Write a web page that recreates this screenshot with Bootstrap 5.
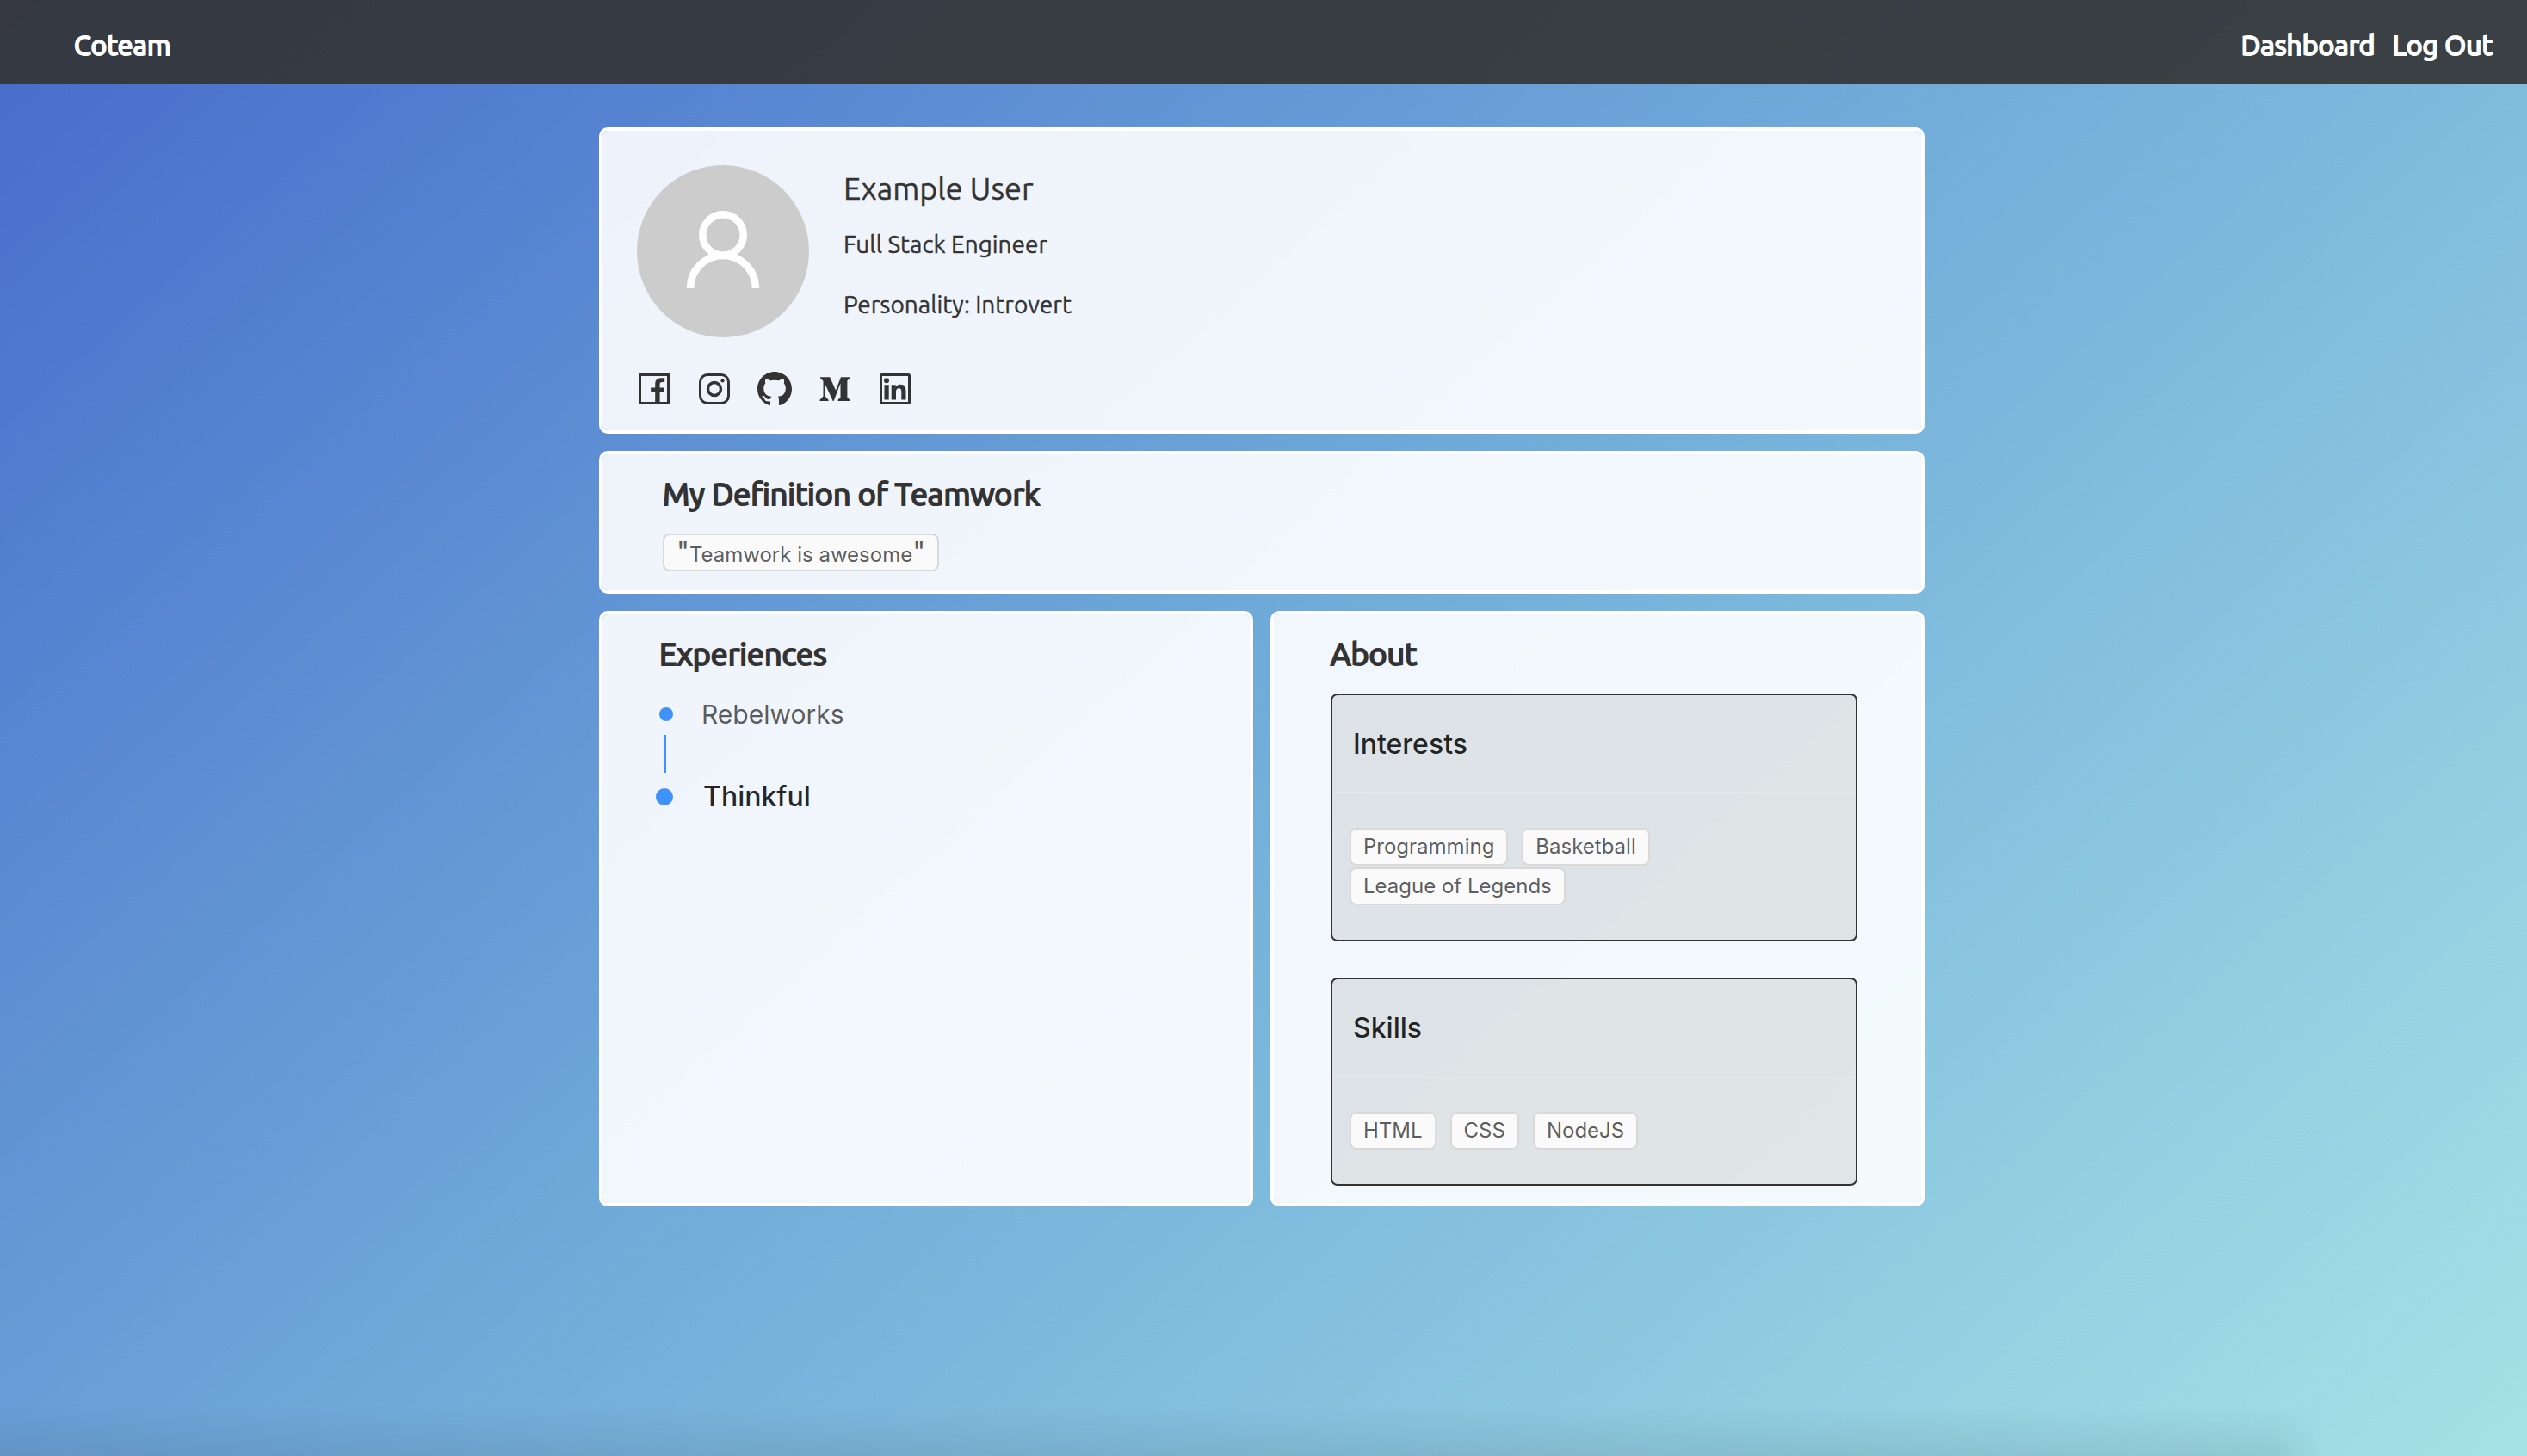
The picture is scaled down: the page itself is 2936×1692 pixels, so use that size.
<!DOCTYPE html>
<html lang="en">
<head>
<meta charset="utf-8">
<meta name="viewport" content="width=device-width, initial-scale=1">
<title>Coteam</title>
<link href="https://cdn.jsdelivr.net/npm/bootstrap@5.3.0/dist/css/bootstrap.min.css" rel="stylesheet">
<style>
  :root { --ink: #333; --display: Ubuntu, Lato, sans-serif; --ui: Inter, "Liberation Sans", sans-serif; }
  body {
    color: var(--ink);
    font-family: var(--display);
    font-size: 28px;
    line-height: 44px;
    background: linear-gradient(138deg, #466bcc 0%, #70abd9 48%, #a4e2e6 100%) no-repeat;
  }
  .topbar { padding: 28px 40px 22px 86px; background: rgba(51, 51, 51, .9); }
  .topbar a { color: #fff; font-size: 32px; line-height: 48px; font-weight: 400; -webkit-text-stroke: 2px; text-decoration: none; }
  .topbar-links { gap: 20px; }

  .profile { width: 100%; max-width: 1544px; padding: 50px 4px 40px 0; gap: 20px; }
  .panel { border: 4px solid #fff; border-radius: 10px; background: rgba(255, 255, 255, .9); background-clip: padding-box; }
  .panel-user { padding: 40px 40px 28px; }
  .panel-quote { padding: 22px 70px; }
  .panel-half { padding: 22px 74px 20px 66px; }
  .halves { gap: 20px; }
  .panel-title { font-size: 36px; line-height: 48px; font-weight: 400; -webkit-text-stroke: 2px; margin-bottom: 22px; }

  .avatar { width: 200px; height: 200px; background: #ccc; }
  .user-row { gap: 40px; }
  .user-text { padding-top: 5px; -webkit-text-stroke: .4px; }
  .user-name { font-size: 36px; line-height: 44px; font-weight: 400; margin-bottom: 21px; }
  .user-line { margin-bottom: 26px; }
  .social { gap: 30px; margin-top: 40px; }
  .social a { color: var(--ink); }
  .social svg { width: 40px; height: 40px; }

  .chip {
    font-family: var(--ui); font-size: 24px; line-height: 40px; color: rgba(0, 0, 0, .65);
    padding: 0 14px; border: 2px solid #d9d9d9; border-radius: 8px; background: #fafafa;
  }
  .chip-quote { font-size: 32px; }
  .chip-quote span { font-size: 24px; line-height: 24px; }
  .chips { gap: 2px 16px; padding: 40px 20px; }

  .steps { font-family: var(--ui); font-size: 30px; line-height: 48px; color: rgba(0, 0, 0, .65); margin-left: -4px; }
  .steps li + li::before { content: ""; display: block; width: 2px; height: 44px; margin: 0 0 4px 10px; background: #3f92f7; }
  .step-row { gap: 33px; }
  .step-rail { width: 20px; }
  .step-dot { width: 16px; height: 16px; background: #3f92f7; }
  .step-now { gap: 35px; font-size: 32px; color: rgba(0, 0, 0, .85); font-weight: 500; }
  .step-now .step-dot { width: 20px; height: 20px; }

  .topics { gap: 42px; }
  .topic { border: 2px solid var(--ink); border-radius: 8px; background: rgba(51, 51, 51, .1); }
  .topic-title {
    font-family: var(--ui); font-size: 32px; line-height: 48px; font-weight: 500; color: rgba(0, 0, 0, .85);
    padding: 33px 24px 31px; border-bottom: 2px solid #e8e8e8;
  }
  .page-shade {
    width: 92%; height: 56px;
    background: linear-gradient(to bottom, rgba(60, 70, 80, 0), rgba(60, 70, 80, .12));
    -webkit-mask-image: linear-gradient(to left, transparent, #000 60px);
    mask-image: linear-gradient(to left, transparent, #000 60px);
  }
</style>
<script src="https://cdn.jsdelivr.net/npm/bootstrap@5.3.0/dist/js/bootstrap.bundle.min.js" defer></script>
</head>
<body class="min-vh-100 d-flex flex-column">
  <nav class="topbar d-flex justify-content-between align-items-center">
    <a href="#">Coteam</a>
    <div class="topbar-links d-flex">
      <a href="#">Dashboard</a>
      <a href="#">Log Out</a>
    </div>
  </nav>

  <main class="profile mx-auto d-flex flex-column">
    <section class="panel panel-user">
      <div class="user-row d-flex">
        <svg class="avatar rounded-circle flex-shrink-0" viewBox="0 0 200 200" fill="none" stroke="#fff" stroke-width="8.5" role="img" aria-label="User avatar">
          <circle cx="100" cy="81" r="23.7"/>
          <path d="M62 143a38 38 0 0 1 76 0"/>
        </svg>
        <div class="user-text">
          <h1 class="user-name">Example User</h1>
          <p class="user-line">Full Stack Engineer</p>
          <p class="mb-0">Personality: Introvert</p>
        </div>
      </div>
      <div class="social d-flex">
        <a class="d-flex" href="#" aria-label="Facebook">
          <svg viewBox="0 0 40 40" fill="currentColor"><path d="M2 2h36v36H2zM5 5v30h16.200V23.800H16.200v-5.300h5V14.500c0-5 2.800-7.200 7-7.200 2 0 3.400.1 4 .2v4.600h-2.900c-2.200 0-2.700 1-2.700 2.600v3.800H32l-.7 5.300h-4.700V35H35V5z" fill-rule="evenodd"/></svg>
        </a>
        <a class="d-flex" href="#" aria-label="Instagram">
          <svg viewBox="0 0 40 40" fill="none" stroke="currentColor"><rect x="3.500" y="3.500" width="33" height="33" rx="8.500" stroke-width="3"/><circle cx="20" cy="20" r="7.500" stroke-width="3.400"/><circle cx="29.500" cy="10.500" r="2.100" fill="currentColor" stroke="none"/></svg>
        </a>
        <a class="d-flex" href="#" aria-label="GitHub">
          <svg viewBox="0 0 16 16" fill="currentColor"><path d="M8 0C3.580 0 0 3.580 0 8c0 3.540 2.290 6.530 5.470 7.590.4.070.55-.17.55-.38 0-.19-.01-.82-.01-1.490-2.010.37-2.530-.49-2.690-.94-.09-.23-.48-.94-.82-1.130-.28-.15-.68-.52-.01-.53.63-.01 1.080.58 1.230.82.72 1.210 1.870.87 2.330.66.070-.52.28-.87.51-1.070-1.780-.2-3.640-.89-3.640-3.950 0-.87.31-1.590.82-2.150-.08-.2-.36-1.020.08-2.120 0 0 .67-.21 2.200.82.64-.18 1.320-.27 2-.27s1.360.09 2 .27c1.530-1.040 2.200-.82 2.200-.82.44 1.100.16 1.920.08 2.120.51.56.82 1.270.82 2.150 0 3.070-1.870 3.750-3.650 3.950.29.25.54.73.54 1.480 0 1.070-.01 1.930-.01 2.200 0 .21.15.46.55.38A8.010 8.010 0 0 0 16 8c0-4.420-3.580-8-8-8z"/></svg>
        </a>
        <a class="d-flex" href="#" aria-label="Medium">
          <svg viewBox="0 0 40 40" fill="currentColor"><path d="M3 6.200h11.200l6.800 15.300 6-15.300h10.700v1.100l-3.300 3V29.700l3 3V34H23.500v-1.300l3-3V13.300L18.700 34h-1L8.600 14.200v14.400l4 4.100V34H2.500v-1.300l4-4.100V10.800L3 7.300z"/></svg>
        </a>
        <a class="d-flex" href="#" aria-label="LinkedIn">
          <svg viewBox="0 0 40 40"><rect x="3.500" y="3.500" width="33" height="33" rx="1" fill="none" stroke="currentColor" stroke-width="3"/><g fill="currentColor"><circle cx="10" cy="10.300" r="3"/><path d="M7.500 15.200h5.200V32.400H7.500zM15.700 15.200h5v2.400c.8-1.500 2.600-2.900 5.200-2.900 5.400 0 6.600 3.500 6.600 8.200v9.500h-5.200V24c0-2 0-4.700-2.900-4.700-2.800 0-3.400 2.200-3.400 4.500v8.600h-5.300z"/></g></svg>
        </a>
      </div>
    </section>

    <section class="panel panel-quote">
      <h2 class="panel-title">My Definition of Teamwork</h2>
      <div class="d-flex"><div class="chip chip-quote">"<span>Teamwork is awesome</span>"</div></div>
    </section>

    <div class="halves row gx-0 flex-nowrap">
      <section class="panel panel-half col">
        <h2 class="panel-title">Experiences</h2>
        <ul class="steps list-unstyled mb-0">
          <li>
            <div class="step-row d-flex align-items-center">
              <span class="step-rail d-flex justify-content-end"><span class="step-dot rounded-circle"></span></span>
              <span>Rebelworks</span>
            </div>
          </li>
          <li>
            <div class="step-row step-now d-flex align-items-center">
              <span class="step-rail d-flex justify-content-end"><span class="step-dot rounded-circle"></span></span>
              <span>Thinkful</span>
            </div>
          </li>
        </ul>
      </section>

      <section class="panel panel-half col">
        <h2 class="panel-title">About</h2>
        <div class="topics d-flex flex-column">
          <article class="topic">
            <h3 class="topic-title mb-0">Interests</h3>
            <div class="chips d-flex flex-wrap">
              <span class="chip">Programming</span>
              <span class="chip">Basketball</span>
              <div class="w-100 d-flex"><span class="chip">League of Legends</span></div>
            </div>
          </article>
          <article class="topic">
            <h3 class="topic-title mb-0">Skills</h3>
            <div class="chips d-flex flex-wrap">
              <span class="chip">HTML</span>
              <span class="chip">CSS</span>
              <span class="chip">NodeJS</span>
            </div>
          </article>
        </div>
      </section>
    </div>
  </main>
  <div class="page-shade mt-auto"></div>
</body>
</html>
